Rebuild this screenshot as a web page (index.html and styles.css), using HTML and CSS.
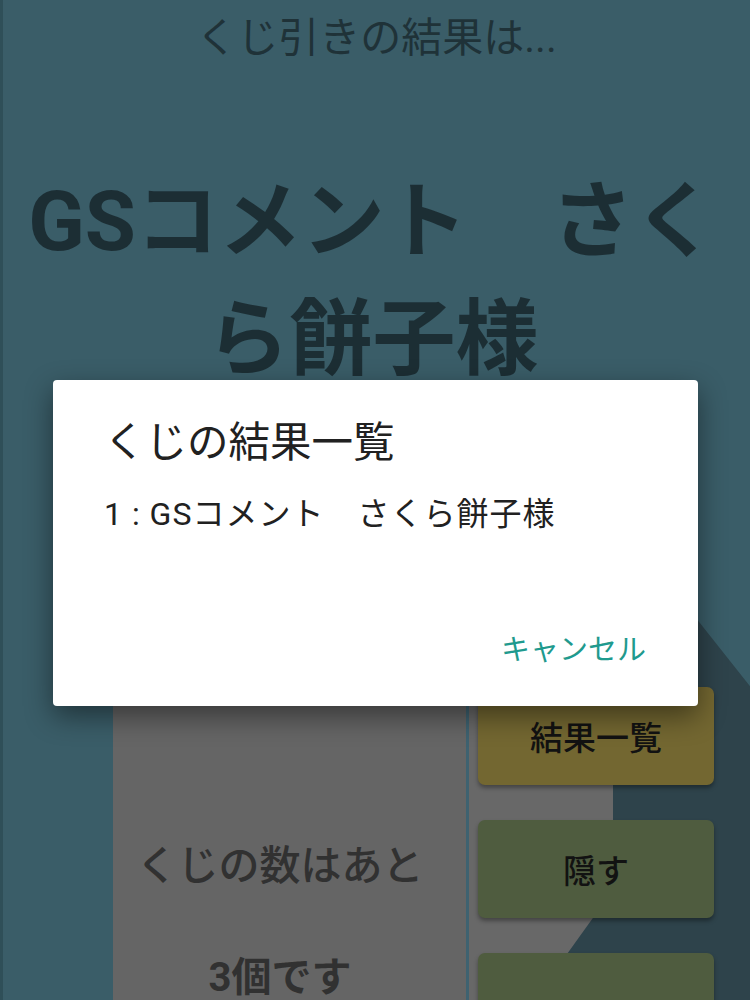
FILE: index.html
```html
<!DOCTYPE html>
<html lang="ja">
<head>
<meta charset="utf-8">
<title>くじ引き</title>
<link rel="stylesheet" href="styles.css">
</head>
<body>
<div class="screen">
  <h1 class="heading">くじ引きの結果は...</h1>
  <p class="winner">GSコメント　さくら餅子様</p>

  <div class="lower">
    <div class="count-panel">
      <p class="count-line">くじの数はあと</p>
      <p class="count-num">3個です</p>
    </div>
    <div class="divider"></div>
    <div class="actions">
      <button class="btn btn-yellow">結果一覧</button>
      <button class="btn btn-green">隠す</button>
      <button class="btn btn-green"></button>
    </div>
  </div>

  <div class="long-shadow"></div>

  <div class="dialog">
    <h2 class="dialog-title">くじの結果一覧</h2>
    <p class="dialog-item">1 : GSコメント　さくら餅子様</p>
    <div class="dialog-actions">
      <span class="dialog-cancel">キャンセル</span>
    </div>
  </div>
</div>
</body>
</html>
```

FILE: styles.css
```css
* { box-sizing: border-box; }

html, body {
  margin: 0;
  padding: 0;
}

body {
  width: 750px;
  height: 1000px;
  overflow: hidden;
  background: #3a5d68;
  font-family: Roboto, "Noto Sans CJK JP", sans-serif;
}

.screen {
  position: relative;
  width: 750px;
  height: 1000px;
  border-left: 3px solid #2f4f58;
  overflow: hidden;
}

.heading {
  margin: 0;
  padding-top: 9px;
  font-size: 41px;
  line-height: 58px;
  font-weight: 400;
  text-align: center;
  color: #1f3238;
}

.winner {
  margin: 96px 8px 0 0;
  font-size: 83px;
  line-height: 118px;
  font-weight: 700;
  text-align: center;
  color: #1c2e34;
}

.lower {
  display: flex;
  margin-top: 203px;
  margin-left: 110px;
  height: 400px;
}

.count-panel {
  width: 353px;
  background: #656565;
  padding: 212px 19px 0 0;
  text-align: center;
  color: #313131;
}

.count-line {
  margin: 0;
  font-size: 41px;
  line-height: 104px;
  font-weight: 500;
}

.count-num {
  margin: 0;
  font-size: 40px;
  line-height: 120px;
  font-weight: 700;
}

.divider {
  width: 3px;
  background: #3e6270;
}

.actions {
  flex: 1;
  display: flex;
  flex-direction: column;
  gap: 35px;
  padding: 85px 0 0 9px;
  background: linear-gradient(to right, #686868 144px, transparent 144px);
}

.btn {
  position: relative;
  z-index: 2;
  width: 236px;
  height: 98px;
  flex: none;
  border: none;
  border-radius: 7px;
  font-family: Roboto, "Noto Sans CJK JP", sans-serif;
  font-size: 33px;
  font-weight: 500;
  color: #121212;
  box-shadow: 0 3px 4px rgba(0, 0, 0, 0.35);
}

.btn-yellow { background: #736731; }
.btn-green { background: #4f5c3f; }

.long-shadow {
  position: absolute;
  z-index: 1;
  left: 0;
  top: 0;
  width: 750px;
  height: 1000px;
  background: #2e434b;
  clip-path: polygon(610px 560px, 647px 560px, 750px 690px, 750px 1000px, 531px 1000px, 610px 890px);
}

.dialog {
  position: absolute;
  z-index: 5;
  left: 50px;
  top: 380px;
  width: 645px;
  height: 326px;
  background: #ffffff;
  border-radius: 4px;
  box-shadow: 0 10px 28px rgba(0, 0, 0, 0.45);
  display: flex;
  flex-direction: column;
  padding: 35px 52px 34px 51px;
}

.dialog-title {
  margin: 0;
  font-size: 41.5px;
  line-height: 56px;
  font-weight: 400;
  color: #212121;
}

.dialog-item {
  margin: 20px 0 0 0;
  font-size: 32px;
  line-height: 46px;
  letter-spacing: 1px;
  color: #212121;
}

.dialog-actions {
  margin-top: auto;
  display: flex;
  justify-content: flex-end;
}

.dialog-cancel {
  font-size: 29px;
  line-height: 44px;
  color: #1f9a8e;
}
```
